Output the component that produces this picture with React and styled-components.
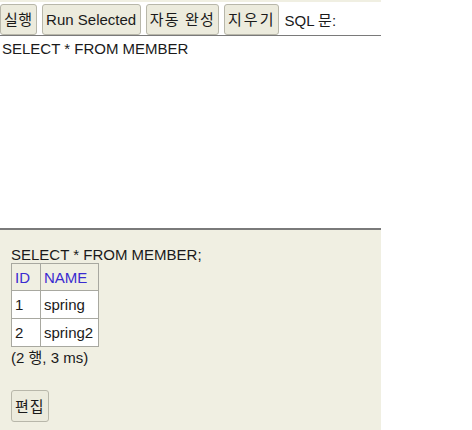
import React from "react";
import styled, { createGlobalStyle } from "styled-components";

const Global = createGlobalStyle`
  html, body { margin: 0; padding: 0; background: #ffffff; }
  body { font-family: Arial, "Liberation Sans", "Noto Sans CJK KR", sans-serif; font-size: 15px; color: #1a1a1a; }
`;

const Frame = styled.div`
  width: 381px;
  height: 430px;
  display: flex;
  flex-direction: column;
`;

const Toolbar = styled.div`
  display: flex;
  align-items: center;
  gap: 5px;
  border-top: 2px solid #f0efe2;
  border-bottom: 1px solid #7a7a7a;
  box-sizing: border-box;
  height: 36px;
  padding-top: 1px;
  background: #ffffff;
`;

const Button = styled.button`
  font-family: Arial, "Liberation Sans", "Noto Sans CJK KR", sans-serif;
  font-size: 15px;
  color: #1a1a1a;
  background: #ecebdd;
  border: 1px solid #b8b7aa;
  border-radius: 3px;
  height: 31px;
  padding: 0 ${(p) => p.$pad ?? 3}px;
  letter-spacing: ${(p) => p.$ls ?? 0}px;
  margin: 0;
  line-height: 29px;
`;

const Label = styled.span`
  margin-left: 0;
`;

const Editor = styled.div`
  height: 194px;
  padding: 4px 2px;
  box-sizing: border-box;
  border-bottom: 2px solid #7a7a7a;
  background: #ffffff;
  white-space: pre;
`;

const Result = styled.div`
  flex: 1;
  background: #f0efe2;
  padding: 16px 11px 0;
`;

const Query = styled.div`
  line-height: 17px;
`;

const Table = styled.table`
  border-collapse: collapse;
  border: 1px solid #a8a8a0;
`;

const Th = styled.th`
  font-weight: normal;
  text-align: left;
  color: #3a2bd0;
  background: #f0efe2;
  border: 1px solid #a8a8a0;
  height: 27px;
  padding: 0 5px 0 3px;
  min-width: ${(p) => p.$min ?? 0}px;
  box-sizing: border-box;
`;

const Td = styled.td`
  background: #ffffff;
  border: 1px solid #a8a8a0;
  height: 27px;
  padding: 0 5px 0 3px;
`;

const Summary = styled.div`
  margin-top: 1px;
  line-height: 20px;
`;

const EditButton = styled(Button)`
  margin-top: 22px;
  height: 32px;
`;

export default function App() {
  const rows = [
    ["1", "spring"],
    ["2", "spring2"],
  ];
  return (
    <>
      <Global />
      <Frame>
        <Toolbar>
          <Button $ls={0.5}>실행</Button>
          <Button $pad={3.5}>Run Selected</Button>
          <Button $ls={1.2}>자동 완성</Button>
          <Button $ls={2}>지우기</Button>
          <Label>SQL 문:</Label>
        </Toolbar>
        <Editor>SELECT * FROM MEMBER</Editor>
        <Result>
          <Query>SELECT * FROM MEMBER;</Query>
          <Table>
            <thead>
              <tr>
                <Th $min={29}>ID</Th>
                <Th>NAME</Th>
              </tr>
            </thead>
            <tbody>
              {rows.map((r) => (
                <tr key={r[0]}>
                  <Td>{r[0]}</Td>
                  <Td>{r[1]}</Td>
                </tr>
              ))}
            </tbody>
          </Table>
          <Summary>(2 행, 3 ms)</Summary>
          <EditButton $ls={1}>편집</EditButton>
        </Result>
      </Frame>
    </>
  );
}
